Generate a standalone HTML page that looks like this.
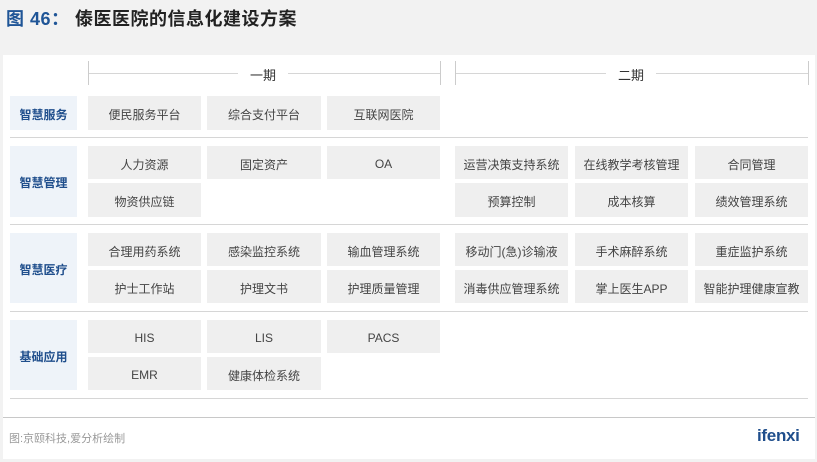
<!DOCTYPE html>
<html><head><meta charset="utf-8"><style>
body{margin:0;width:817px;height:462px;background:#f2f2f2;font-family:"Liberation Sans","Noto Sans CJK SC",sans-serif;position:relative;overflow:hidden}
.a{position:absolute}
.t{left:6px;top:5px;font-size:18px;font-weight:bold;color:#222;letter-spacing:0.5px}
.t span{color:#1f5597}
.panel{left:3px;top:55px;width:812px;height:404px;background:#fff}
.b{position:absolute;background:#efefef;color:#444;font-size:12px;display:flex;align-items:center;justify-content:center;box-sizing:border-box;padding-top:3px}
.l{position:absolute;background:#eef3f9;color:#1f4e8c;font-size:12px;font-weight:bold;display:flex;align-items:center;justify-content:center;left:10px;width:67px;box-sizing:border-box;padding-top:2px}
.hl{position:absolute;height:1px;background:#d6d6d6}
.vt{position:absolute;width:1px;height:24px;top:61px;background:#ccc}
.ph{position:absolute;top:65px;font-size:13px;color:#333;background:#fff;padding:0 12px}
</style></head><body>
<div class="a t"><span>图 46：</span> 傣医医院的信息化建设方案</div>
<div class="a panel"></div>
<div class="hl" style="left:88px;width:352px;top:73px"></div>
<div class="hl" style="left:455px;width:353px;top:73px"></div>
<div class="vt" style="left:88px"></div><div class="vt" style="left:440px"></div>
<div class="vt" style="left:455px"></div><div class="vt" style="left:808px"></div>
<div class="ph" style="left:238px">一期</div>
<div class="ph" style="left:606px">二期</div>

<div class="l" style="top:96px;height:34px">智慧服务</div>
<div class="b" style="left:88px;top:96px;width:113px;height:34px">便民服务平台</div>
<div class="b" style="left:207px;top:96px;width:114px;height:34px">综合支付平台</div>
<div class="b" style="left:327px;top:96px;width:113px;height:34px">互联网医院</div>
<div class="hl" style="left:10px;width:798px;top:137px"></div>

<div class="l" style="top:146px;height:71px">智慧管理</div>
<div class="b" style="left:88px;top:146px;width:113px;height:33px">人力资源</div>
<div class="b" style="left:207px;top:146px;width:114px;height:33px">固定资产</div>
<div class="b" style="left:327px;top:146px;width:113px;height:33px">OA</div>
<div class="b" style="left:455px;top:146px;width:113px;height:33px">运营决策支持系统</div>
<div class="b" style="left:575px;top:146px;width:113px;height:33px">在线教学考核管理</div>
<div class="b" style="left:695px;top:146px;width:113px;height:33px">合同管理</div>
<div class="b" style="left:88px;top:183px;width:113px;height:34px">物资供应链</div>
<div class="b" style="left:455px;top:183px;width:113px;height:34px">预算控制</div>
<div class="b" style="left:575px;top:183px;width:113px;height:34px">成本核算</div>
<div class="b" style="left:695px;top:183px;width:113px;height:34px">绩效管理系统</div>
<div class="hl" style="left:10px;width:798px;top:224px"></div>

<div class="l" style="top:233px;height:70px">智慧医疗</div>
<div class="b" style="left:88px;top:233px;width:113px;height:33px">合理用药系统</div>
<div class="b" style="left:207px;top:233px;width:114px;height:33px">感染监控系统</div>
<div class="b" style="left:327px;top:233px;width:113px;height:33px">输血管理系统</div>
<div class="b" style="left:455px;top:233px;width:113px;height:33px">移动门(急)诊输液</div>
<div class="b" style="left:575px;top:233px;width:113px;height:33px">手术麻醉系统</div>
<div class="b" style="left:695px;top:233px;width:113px;height:33px">重症监护系统</div>
<div class="b" style="left:88px;top:270px;width:113px;height:33px">护士工作站</div>
<div class="b" style="left:207px;top:270px;width:114px;height:33px">护理文书</div>
<div class="b" style="left:327px;top:270px;width:113px;height:33px">护理质量管理</div>
<div class="b" style="left:455px;top:270px;width:113px;height:33px">消毒供应管理系统</div>
<div class="b" style="left:575px;top:270px;width:113px;height:33px">掌上医生APP</div>
<div class="b" style="left:695px;top:270px;width:113px;height:33px">智能护理健康宣教</div>
<div class="hl" style="left:10px;width:798px;top:311px"></div>

<div class="l" style="top:320px;height:70px">基础应用</div>
<div class="b" style="left:88px;top:320px;width:113px;height:33px">HIS</div>
<div class="b" style="left:207px;top:320px;width:114px;height:33px">LIS</div>
<div class="b" style="left:327px;top:320px;width:113px;height:33px">PACS</div>
<div class="b" style="left:88px;top:357px;width:113px;height:33px">EMR</div>
<div class="b" style="left:207px;top:357px;width:114px;height:33px">健康体检系统</div>
<div class="hl" style="left:10px;width:798px;top:398px"></div>

<div class="hl" style="left:3px;width:812px;top:417px;background:#c8c8c8"></div>
<div class="a" style="left:9px;top:430px;font-size:11px;color:#999">图:京颐科技,爱分析绘制</div>
<div class="a" style="left:757px;top:426px;font-size:17px;font-weight:bold;color:#1f4e8c;letter-spacing:-0.3px">ifenxi</div>
</body></html>
